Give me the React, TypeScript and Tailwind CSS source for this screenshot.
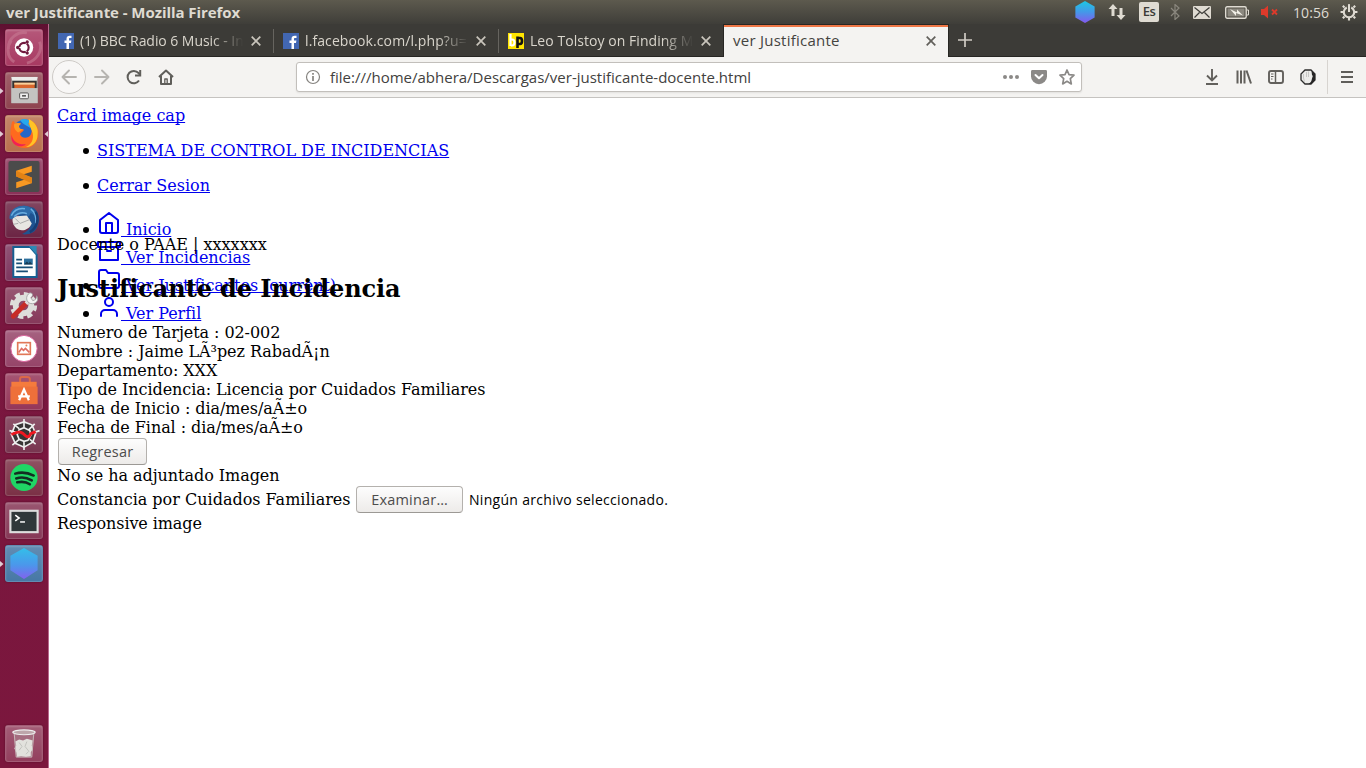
import type { ReactNode } from "react";

function Hexagon({ id, className }: { id: string; className: string }) {
  return (
    <svg viewBox="0 0 28 32" className={className}>
      <defs>
        <linearGradient id={id} x1="0" y1="0" x2="0" y2="1">
          <stop offset="0" stopColor="#1cc8e4" />
          <stop offset=".5" stopColor="#4498e8" />
          <stop offset="1" stopColor="#8458ee" />
        </linearGradient>
      </defs>
      <path d="M14 0 28 8v16l-14 8L0 24V8z" fill={`url(#${id})`} />
    </svg>
  );
}

function TitleBar() {
  return (
    <header className="flex h-6 shrink-0 items-center bg-linear-to-b from-[#5d5a4e] to-[#3f3e39] pl-[6px] text-[#dfdbd2]">
      <span className="w-[240px] whitespace-nowrap text-[15px] leading-5 font-bold tracking-[-0.06px]">ver Justificante - Mozilla Firefox</span>
      <div className="ml-auto flex h-6 items-center">
        <Hexagon id="tray" className="h-[22px] w-[20px]" />
        <svg width="18" height="18" viewBox="0 0 18 18" className="ml-[13px]" fill="#dfdbd2">
          <path d="M5 1 9.500 6H6.500v7h-3V6H.5zM13 17l-4.500-5h3V5h3v7h3z" />
        </svg>
        <span className="ml-[13px] flex h-5 w-5 items-center justify-center rounded-[2px] bg-[#dfdbd2] text-[13px] font-semibold tracking-[-0.5px] text-[#3c3b37]">Es</span>
        <svg width="10" height="16" viewBox="0 0 10 16" className="ml-[11px]" fill="none" stroke="#8a877e" strokeWidth="1.200">
          <path d="m1 4 8 8-4 3.500V.5L9 4l-8 8" />
        </svg>
        <svg width="18" height="13" viewBox="0 0 18 13" className="ml-[13px]">
          <rect width="18" height="13" rx="1" fill="#dfdbd2" />
          <path d="m1.500 1.500 7.500 6 7.500-6M1.500 11.500l5-5M16.500 11.500l-5-5" fill="none" stroke="#3c3b37" strokeWidth="1.200" />
        </svg>
        <svg width="24" height="13" viewBox="0 0 24 13" className="ml-[14px]">
          <rect x=".7" y=".7" width="20.500" height="11.600" rx="1.500" fill="none" stroke="#dfdbd2" strokeWidth="1.400" />
          <path d="M22 4h1.500v5H22" fill="none" stroke="#dfdbd2" />
          <rect x="2.500" y="2.500" width="17" height="8" fill="#8b887f" />
          <path d="m5 3 7 3.500V3.500l6 6-7-2.500v3z" fill="#f2f0e8" />
        </svg>
        <svg width="18" height="14" viewBox="0 0 18 14" className="ml-[12px]">
          <path d="M0 4h3l4-3.500v13L3 10H0z" fill="#dd3a2b" />
          <path d="m11 4.500 5 5m0-5-5 5" stroke="#dd3a2b" strokeWidth="1.800" />
        </svg>
        <span className="ml-[14px] w-[37px] whitespace-nowrap text-[14px] tracking-[0.1px]">10:56</span>
        <svg width="18" height="18" viewBox="0 0 16 16" className="ml-[10px] mr-[8px]" fill="none" stroke="#dfdbd2">
          <path d="M6 4a4.600 4.600 0 1 0 4 0" strokeWidth="1.800" />
          <path d="M8 1v7" strokeWidth="1.800" />
          <path d="m2.500 2.500 1.500 1.500M13.500 2.500 12 4M.5 8H3m10 0h2.500M2.500 13.500 4 12m9.500 1.500L12 12M8 13v2.500" strokeWidth="1.900" />
        </svg>
      </div>
    </header>
  );
}

const appIcons: { name: string; tile: string; art: ReactNode; left?: boolean; right?: boolean }[] = [
  {
    name: "dash",
    tile: "bg-[#a83a62]",
    art: (
      <>
        <path d="M2 20C1 8 12 1 21 3M34 12c4 10-4 20-13 22M8 33C-1 27 1 16 5 11" fill="none" stroke="#c77993" strokeWidth="3" opacity=".6" />
        <circle cx="18" cy="18" r="9.500" fill="#fff" />
        <circle cx="18" cy="18" r="4.800" fill="none" stroke="#701a3e" strokeWidth="2.200" />
        <path d="M18 18h-8M18 18l4-7M18 18l4 7" stroke="#fff" strokeWidth="1" />
        <g fill="#701a3e"><circle cx="11.500" cy="18" r="1.700" /><circle cx="21.300" cy="12.300" r="1.700" /><circle cx="21.300" cy="23.700" r="1.700" /></g>
      </>
    ),
  },
  {
    name: "files",
    tile: "bg-[#8f4450]",
    left: true,
    art: (
      <>
        <path d="M5 4h27v27H5z" fill="#aaa9a6" />
        <path d="M5 4h27l-1 4H6z" fill="#ececea" />
        <path d="M6 8h25v9H6z" fill="#333" />
        <path d="M8 10h21v7H8z" fill="#d9662c" /><path d="M8 10h21v2H8z" fill="#f8d19b" />
        <path d="M5 15.500h27V31H5z" fill="#c4c3c1" />
        <rect x="13.500" y="20.500" width="9" height="6" rx="1" fill="#eee" stroke="#555" />
        <path d="M16 23.500h4" stroke="#444" strokeWidth="1.500" />
      </>
    ),
  },
  {
    name: "firefox",
    tile: "bg-[#b9704e]",
    left: true,
    right: true,
    art: (
      <>
        <circle cx="19" cy="16" r="12.500" fill="#2467c9" />
        <path d="M14 4c4-2 9-1 12 3l-2 5c-4-3-7-3-10-8z" fill="#28a9ec" />
        <path d="M5 10c0-3 1-4 2-5l2 3c2-1 4-1 6 0-2 1-3 3-1 5l4 1c-1 3-4 3-4 5 2 5 9 4 11 0 3-6-2-9-3-12 3 1 5 3 6 5 0-3-3-6-4-8 7 3 9 9 9 14 0 9-6 15-14 15C10 33 4 27 4 19c0-3 0-6 1-9z" fill="#ff6a1e" />
        <path d="M23 3c7 4 10 9 9 16 0 8-6 13-12 13 6-3 8-8 7-14-1-5-4-7-4-15z" fill="#ffc326" />
        <path d="M8 8c3-1 5-1 7 0-2 1-3 3-1 5l3 1-5 3c-3-2-5-5-4-9z" fill="#ff9b22" />
        <path d="M5 19c2 8 8 11 15 10-4 4-14 3-15-6z" fill="#f02354" />
      </>
    ),
  },
  {
    name: "sublime",
    tile: "bg-[#8b3158]",
    art: (
      <>
        <rect x="2" y="2" width="32" height="32" rx="2" fill="#4b4b4b" />
        <path d="m10 12 16-5v6l-9 3 9 3v6l-16 5v-6l9-3-9-3z" fill="#f89822" />
        <path d="m10 12 16 7v6l-16-7z" fill="#e28215" />
      </>
    ),
  },
  {
    name: "thunderbird",
    tile: "bg-[#6c2544]",
    art: (
      <>
        <path d="M4 17C3 8 12 3 20 4l8 2c6 5 7 14 3 21-3 6-11 7-15 6 5-2 8-5 9-9L10 12z" fill="#1f5390" />
        <path d="m7 15 14-1 5 8c-3 7-11 9-16 5-3-3-5-8-3-12z" fill="#e7e6e2" />
        <path d="m9 17 5 5 10-4M7 23l5-1" fill="none" stroke="#aaa" />
        <path d="M3 17C3 9 9 4 16 4c7-1 13 3 14 11l-5-4-2 4-5-3-7 2-6 4z" fill="#2d6dab" />
        <path d="M5 14c3-6 8-8 14-7M8 15c4-4 8-5 13-3M25 7c4 3 6 8 5 15" fill="none" stroke="#6aaee0" strokeWidth="1.500" />
        <path d="M30 10c4 8 1 17-6 21" stroke="#173e75" fill="none" strokeWidth="2.500" />
      </>
    ),
  },
  {
    name: "writer",
    tile: "bg-[#7d365e]",
    art: (
      <>
        <path d="M7 2h17l7 8v23H7z" fill="#fff" stroke="#155f93" strokeWidth="2" />
        <path d="M23 1h8v9z" fill="#2c88b5" />
        <path d="M10 15h6m-6 4h6m-6 4h17m-17 4h12" stroke="#174e76" strokeWidth="1.800" />
        <rect x="18" y="14" width="9" height="6" fill="#2c6f9d" /><path d="m18 20 3-3 2 2 1-2 3 3z" fill="#183b54" />
      </>
    ),
  },
  {
    name: "settings",
    tile: "bg-[#86395a]",
    art: (
      <>
        <circle cx="17.500" cy="18" r="8" fill="none" stroke="#dededb" strokeWidth="6" />
        <circle cx="17.500" cy="18" r="12" fill="none" stroke="#dededb" strokeWidth="4" strokeDasharray="5.400 4.020" />
        <path d="m7 29 13-13" stroke="#c72c27" strokeWidth="5" strokeLinecap="round" />
        <path d="m20 16 5-5" stroke="#ddd" strokeWidth="4" />
        <path d="M24 5c4 0 3 4 1 5l2 3c3 0 4-3 4-5 3 5-1 9-6 8-5-1-6-8-1-11z" fill="#f2f2f0" stroke="#999" strokeWidth=".8" />
      </>
    ),
  },
  {
    name: "photos",
    tile: "bg-[#964569]",
    art: (
      <>
        <circle cx="18" cy="18" r="13.500" fill="#fff" stroke="#db669e" strokeWidth="1" />
        <rect x="11.500" y="12" width="13" height="12" fill="none" stroke="#e17858" strokeWidth="1.700" />
        <path d="m12.500 22 3-4 2 2 2-2 4 4" fill="none" stroke="#df6e61" strokeWidth="1.700" /><circle cx="20.500" cy="15" r="1" fill="#e88152" />
      </>
    ),
  },
  {
    name: "software",
    tile: "bg-[#95375a]",
    art: (
      <>
        <path d="M14 9V5c0-1 1-2 2-2h5c2 0 3 1 3 2v4" stroke="#dc6847" fill="none" strokeWidth="2" />
        <path d="M5 8h26v6H5z" fill="#f57b3d" /><path d="M4 13h28v18H4z" fill="#ee703a" />
        <path d="m13 27 5-11 5 11m-11-4h12" stroke="#fff" strokeWidth="2.300" fill="none" />
      </>
    ),
  },
  {
    name: "spider",
    tile: "bg-[#793550]",
    art: (
      <>
        <path d="m18 5 8 3 4 9-3 9-9 5-9-4-4-9 4-10z" fill="#373434" stroke="#eee" strokeWidth="1.700" />
        <path d="M18 2v9M3 14l8 2M7 7l6 5M29 7l-6 6M34 14l-9 3M30 28l-6-5M18 34v-9M6 29l7-6M18 11l6 3 1 5-3 5-4 1-5-2-2-5 2-5z" fill="none" stroke="#eee" strokeWidth="1.700" />
        <path d="M5 18c5-2 8-4 12-1 4 4 6 5 8 0l5-2" stroke="#ee1720" fill="none" strokeWidth="3" />
      </>
    ),
  },
  {
    name: "spotify",
    tile: "bg-[#7b3146]",
    art: (
      <>
        <circle cx="18" cy="18" r="14" fill="#20d665" />
        <path d="M9 14c7-2 13-1 19 2M10 19c6-2 11-1 16 2m-15 2c5-1 9-1 13 2" stroke="#132d22" strokeWidth="2.600" fill="none" strokeLinecap="round" />
      </>
    ),
  },
  {
    name: "terminal",
    tile: "bg-[#873857]",
    art: (
      <>
        <rect x="4" y="8" width="28" height="22" fill="#30383a" stroke="#ddd" strokeWidth="2.200" />
        <path d="m9 12.500 4 3-4 3" fill="none" stroke="#fff" strokeWidth="1.600" /><path d="M14 19.500h5" stroke="#fff" strokeWidth="1.500" />
      </>
    ),
  },
  {
    name: "hex",
    tile: "bg-[#4778a5]",
    left: true,
    art: (
      <>
        <defs><linearGradient id="launch" x1="0" y1="0" x2="0" y2="1"><stop offset="0" stopColor="#33bfe9" /><stop offset=".55" stopColor="#4b97eb" /><stop offset="1" stopColor="#8262ee" /></linearGradient></defs>
        <path d="m18 2 14 8v15l-14 9-14-9V10z" fill="url(#launch)" />
      </>
    ),
  },
];

function Tile({ tile, children }: { tile: string; children: ReactNode }) {
  return (
    <span className={`block h-[37px] w-[38px] rounded-[3px] border border-white/15 shadow-[inset_0_1px_2px_rgba(255,255,255,.18),0_0_2px_rgba(50,0,20,.5)] ${tile}`}>
      <svg viewBox="0 0 36 36" className="h-[35px] w-[36px] bg-linear-to-b from-white/15 to-transparent">{children}</svg>
    </span>
  );
}

function Launcher() {
  return (
    <aside className="flex w-[49px] shrink-0 flex-col border-r border-[#b7688c] bg-linear-to-b from-[#5d1030] via-[#781640] via-[3%] to-[#7b173d] pt-[5px]">
      <div className="flex flex-col gap-[6px]">
        {appIcons.map((app) => (
          <div key={app.name} className="flex h-[37px] items-center">
            <span className="flex w-[5px] items-center">
              {app.left && <svg width="4" height="6" viewBox="0 0 4 6"><path d="M0 0 3.500 3 0 6z" fill="#e0ccd5" /></svg>}
            </span>
            <Tile tile={app.tile}>{app.art}</Tile>
            {app.right && <svg width="4" height="6" viewBox="0 0 4 6" className="ml-px"><path d="M4 0 .5 3 4 6z" fill="#e0ccd5" /></svg>}
          </div>
        ))}
      </div>
      <div className="mt-auto mb-[6px] ml-[5px]">
        <Tile tile="bg-[#93405e]">
          <path d="M7 6h22l-3 26H10z" fill="#a56e80" />
          <path d="m9 16 4-2 4 1 4-2 6 2-1 5 1 4-2 3v4l-5 1-5-1-4 1-1-5-2-4 2-3z" fill="#e2e2dd" />
          <path d="m13 17 3 4-3 4m8-9-2 5 4 5-3 3" stroke="#c1c2bd" fill="none" />
          <ellipse cx="18" cy="6.500" rx="11.500" ry="2.500" fill="#bda6aa" stroke="#eee" strokeWidth="1.200" />
          <path d="m8 8 2 24h16l2-24" fill="none" stroke="#c7b9ba" />
        </Tile>
      </div>
    </aside>
  );
}

function Facebook() {
  return (
    <svg width="16" height="16" viewBox="0 0 16 16" className="shrink-0">
      <path fill="#4267b2" d="M0 0h16v16H0z" />
      <path fill="#fff" d="M8.500 16v-6H6.500V7.500h2V6c0-2.200 1.200-3.200 3.200-3.200h1.800V5H12c-.8 0-1 .4-1 1.100v1.400h2.400L13 10h-2v6z" />
    </svg>
  );
}

function Cross({ color }: { color: string }) {
  return (
    <svg width="10" height="10" viewBox="0 0 10 10" className="shrink-0" stroke={color} strokeWidth="1.700"><path d="m.7.7 8.600 8.600m0-8.600L.7 9.300" /></svg>
  );
}

function Tab({ icon, label, width, track, divider }: { icon: ReactNode; label: string; width: string; track: string; divider: boolean }) {
  return (
    <div className={`flex h-[33px] items-center pl-[9px] ${width}`}>
      {icon}
      <span className={`ml-[6px] w-[165px] shrink-0 overflow-hidden whitespace-nowrap text-[14px] leading-5 text-[#d9d5cc] mask-r-from-80% mask-r-to-99% ${track}`}>{label}</span>
      <span className="ml-[6px] flex"><Cross color="#c9c5bc" /></span>
      {divider && <span className="ml-auto h-6 w-px bg-[#66645f]" />}
    </div>
  );
}

function Tabs() {
  return (
    <div className="flex h-[33px] border-b border-[#272623] bg-[#3c3b37]">
      <Tab icon={<Facebook />} label="(1) BBC Radio 6 Music - In" width="w-[225px]" track="tracking-[-0.05px]" divider />
      <Tab icon={<Facebook />} label="l.facebook.com/l.php?u=" width="w-[225px]" track="tracking-[0.1px]" divider />
      <Tab
        icon={
          <svg width="16" height="16" viewBox="0 0 16 16" className="shrink-0">
            <path fill="#ffe500" d="M0 0h16v16H0z" />
            <path d="M2.500 1v12M3 6.500h1q2.500 0 2.500 3T4 12.500H3" stroke="#fff" strokeWidth="2.200" fill="none" />
            <path d="M9.500 3.500V15M9.500 5H12q2 0 2 3t-2 3H9.500" stroke="#111" strokeWidth="2.600" fill="none" />
          </svg>
        }
        label="Leo Tolstoy on Finding M"
        width="w-[224px]"
        track="tracking-[0.05px]"
        divider={false}
      />
      <div className="-mb-px flex w-[226px] items-center border-x border-t border-[#272623] bg-[#f4f3f1] pl-[9px] shadow-[inset_0_2px_0_#ee7645]">
        <span className="w-[193px] -translate-y-px text-[15px] leading-5 tracking-[0.25px] text-[#44433f]">ver Justificante</span>
        <Cross color="#62605b" />
      </div>
      <svg width="14" height="14" viewBox="0 0 14 14" className="mt-[9px] ml-[9px]" stroke="#d0ccc4" strokeWidth="1.700"><path d="M7 0v14M0 7h14" /></svg>
    </div>
  );
}

function Toolbar() {
  return (
    <div className="flex h-[41px] items-center border-b border-[#c5c3c0] bg-[#f4f3f1]">
      <span className="ml-[3px] flex h-[34px] w-[34px] items-center justify-center rounded-full border border-[#cecbc7] bg-[#f8f7f6]">
        <svg width="16" height="16" viewBox="0 0 16 16" fill="none" stroke="#b6b4b0" strokeWidth="1.900" strokeLinecap="round" strokeLinejoin="round"><path d="M8 1.500 1.500 8 8 14.500M1.500 8H15" /></svg>
      </span>
      <svg width="16" height="16" viewBox="0 0 16 16" className="ml-[8px]" fill="none" stroke="#b6b4b0" strokeWidth="1.900" strokeLinecap="round" strokeLinejoin="round"><path d="m8 1.500 6.500 6.500L8 14.500M14.500 8H1" /></svg>
      <svg width="16" height="16" viewBox="0 0 16 16" className="ml-[16px]" fill="none" stroke="#5f5e5a" strokeWidth="2"><path d="M13 11.500A6.200 6.200 0 1 1 12.500 4L14 6" /><path d="M14.200 1v5.500H9" /></svg>
      <svg width="16" height="16" viewBox="0 0 16 16" className="ml-[16px]" fill="none" stroke="#5f5e5a" strokeWidth="2" strokeLinejoin="round"><path d="m1 8 7-6.500L15 8M3 7v8h10V7" /><path d="M6.800 15v-5h2.400v5" strokeWidth="1.300" /></svg>
      <div className="ml-[122px] flex h-[30px] w-[786px] items-center rounded-[3px] border border-[#c2bfbb] bg-white pl-[8px] shadow-[0_1px_2px_rgba(0,0,0,.08)]">
        <svg width="16" height="16" viewBox="0 0 16 16" fill="none" stroke="#85837f"><circle cx="8" cy="8" r="6.500" strokeWidth="1.200" /><path d="M8 7v5M8 4v1.700" strokeWidth="1.700" /></svg>
        <span className="ml-[9px] w-[600px] whitespace-nowrap text-[15px] leading-5 text-[#42413e]">file:///home/abhera/Descargas/ver-justificante-docente.html</span>
        <svg width="16" height="16" viewBox="0 0 16 16" className="ml-[73px]" fill="#8b8987"><circle cx="2" cy="8" r="2" /><circle cx="8" cy="8" r="2" /><circle cx="14" cy="8" r="2" /></svg>
        <svg width="16" height="16" viewBox="0 0 16 16" className="ml-[12px]"><path d="M1.500 1h13C15.500 1 16 1.500 16 2.500v4.700a8 8 0 0 1-16 0V2.500C0 1.500.5 1 1.500 1z" fill="#8b8987" /><path d="m4.500 6 3.500 3.300L11.500 6" fill="none" stroke="#fff" strokeWidth="2" strokeLinecap="round" strokeLinejoin="round" /></svg>
        <svg width="16" height="16" viewBox="0 0 16 16" className="ml-[12px]" fill="none" stroke="#8b8987" strokeWidth="1.700" strokeLinejoin="round"><path d="m8 1 2 4.700 5 .5-3.700 3.500 1 5.200L8 12.300l-4.300 2.600 1-5.200L1 6.200l5-.5z" /></svg>
      </div>
      <svg width="16" height="16" viewBox="0 0 16 16" className="ml-[122px]" fill="none" stroke="#62605c" strokeWidth="1.900"><path d="M8 0v11M3 6.500l5 5 5-5M2 15h12" /></svg>
      <svg width="16" height="16" viewBox="0 0 16 16" className="ml-[16px]" fill="none" stroke="#62605c" strokeWidth="2"><path d="M1.500 1.500v13M5 1.500v13M8.500 1.500v13M10.500 1.500l4.500 13" /></svg>
      <svg width="16" height="16" viewBox="0 0 16 16" className="ml-[16px]" fill="none" stroke="#62605c"><rect x="1" y="2" width="14" height="12" rx="2" strokeWidth="1.900" /><path d="M7.500 2v12" strokeWidth="1.500" /><path d="M3 5h2.500M3 7.500h2.500M3 10h1.500" /></svg>
      <svg width="16" height="16" viewBox="0 0 16 16" className="ml-[16px]">
        <path d="M5 1h6l4 4v6l-4 4H5l-4-4V5z" fill="#ececea" stroke="#2d2d2d" strokeWidth="1.300" />
        <path d="M11.500 2 15 5v6l-4 4H8.500c2.500-1.500 3-3 3.500-5.500l.8-2.500-.8-1z" fill="#252525" />
        <path d="M4.500 12.500 3.500 9V5M6.500 3v5m2-5.500V8" fill="none" stroke="#c8c8c6" />
      </svg>
      <span className="ml-[11px] h-[34px] w-px bg-[#d7d4d0]" />
      <svg width="12" height="12" viewBox="0 0 12 12" className="ml-[13px]" stroke="#5f5e5a" strokeWidth="1.800"><path d="M0 1h12M0 6h12M0 11h12" /></svg>
    </div>
  );
}

const linkClass = "text-[#0000ee] underline decoration-[1px] underline-offset-[1px] [text-decoration-skip-ink:none]";

function Bullet() {
  return <span className="absolute top-[7px] -left-[14px] h-[6px] w-[6px] rounded-full bg-black" />;
}

const links: { label: string; art: ReactNode }[] = [
  { label: "Inicio", art: <path d="m3 9 9-7 9 7v11a2 2 0 0 1-2 2H5a2 2 0 0 1-2-2zM9 22V12h6v10" /> },
  { label: "Ver Incidencias", art: <path d="M21 8v13H3V8M1 3h22v5H1zM10 12h4" /> },
  { label: "Ver Justificantes (current)", art: <path d="M22 19a2 2 0 0 1-2 2H4a2 2 0 0 1-2-2V5a2 2 0 0 1 2-2h5l2 3h9a2 2 0 0 1 2 2z" /> },
  { label: "Ver Perfil", art: <><path d="M20 21v-2a4 4 0 0 0-4-4H8a4 4 0 0 0-4 4v2" /><circle cx="12" cy="7" r="4" /></> },
];

const details = [
  "Numero de Tarjeta : 02-002",
  "Nombre : Jaime LÃ³pez RabadÃ¡n",
  "Departamento: XXX",
  "Tipo de Incidencia: Licencia por Cuidados Familiares",
  "Fecha de Inicio : dia/mes/aÃ±o",
  "Fecha de Final : dia/mes/aÃ±o",
];

function GtkButton({ label, width }: { label: string; width: string }) {
  return (
    <button className={`h-[27px] shrink-0 rounded-[4px] border border-[#b4b1ad] border-b-[#9c9995] bg-linear-to-b from-[#fdfdfd] to-[#edebe9] font-['Open_Sans',sans-serif] text-[14.500px] leading-[24px] tracking-[0.2px] text-[#4c4c4c] ${width}`}>{label}</button>
  );
}

function Page() {
  return (
    <main className="flex-1 bg-white pt-2 pl-2 font-['DejaVu_Serif',serif] text-[16px] leading-[19px] text-black">
      <p><a className={linkClass}>Card image cap</a></p>
      <ul className="mt-4 pl-10"><li className="relative"><Bullet /><a className={linkClass}>SISTEMA DE CONTROL DE INCIDENCIAS</a></li></ul>
      <ul className="mt-4 pl-10"><li className="relative"><Bullet /><a className={linkClass}>Cerrar Sesion</a></li></ul>
      <nav className="mt-4 h-6 pl-10">
        {links.map((link) => (
          <div key={link.label} className="flex h-7">
            <span className="mt-[16px] -ml-[14px] mr-[8px] h-[6px] w-[6px] shrink-0 rounded-full bg-black" />
            <svg width="24" height="24" viewBox="0 0 24 24" className="shrink-0" fill="none" stroke="#0000ee" strokeWidth="2" strokeLinecap="round" strokeLinejoin="round">{link.art}</svg>
            <a className={`mt-[9px] whitespace-pre tracking-[-0.04px] ${linkClass}`}>{` ${link.label}`}</a>
          </div>
        ))}
      </nav>
      <p>Docente o PAAE | xxxxxxx</p>
      <h2 className="my-5 h-[29px] text-[24px] leading-[29px] font-bold tracking-[-0.09px]">Justificante de Incidencia</h2>
      {details.map((line) => <p key={line} className="tracking-[-0.065px]">{line}</p>)}
      <div className="flex h-[29px] items-center pl-px"><GtkButton label="Regresar" width="w-[89px]" /></div>
      <p className="tracking-[-0.05px]">No se ha adjuntado Imagen</p>
      <div className="flex h-[29px] items-center">
        <span className="w-[299px] whitespace-nowrap">Constancia por Cuidados Familiares</span>
        <GtkButton label="Examinar…" width="w-[107px]" />
        <span className="ml-[6px] font-['Open_Sans',sans-serif] text-[14px] font-medium tracking-[0.3px]">Ningún archivo seleccionado.</span>
      </div>
      <p className="tracking-[-0.1px]">Responsive image</p>
    </main>
  );
}

export default function App() {
  return (
    <div className="flex h-[768px] w-[1366px] flex-col overflow-hidden font-['Open_Sans','Noto_Sans',sans-serif]">
      <TitleBar />
      <div className="flex min-h-0 flex-1">
        <Launcher />
        <div className="flex min-w-0 flex-1 flex-col">
          <Tabs />
          <Toolbar />
          <Page />
        </div>
      </div>
    </div>
  );
}
